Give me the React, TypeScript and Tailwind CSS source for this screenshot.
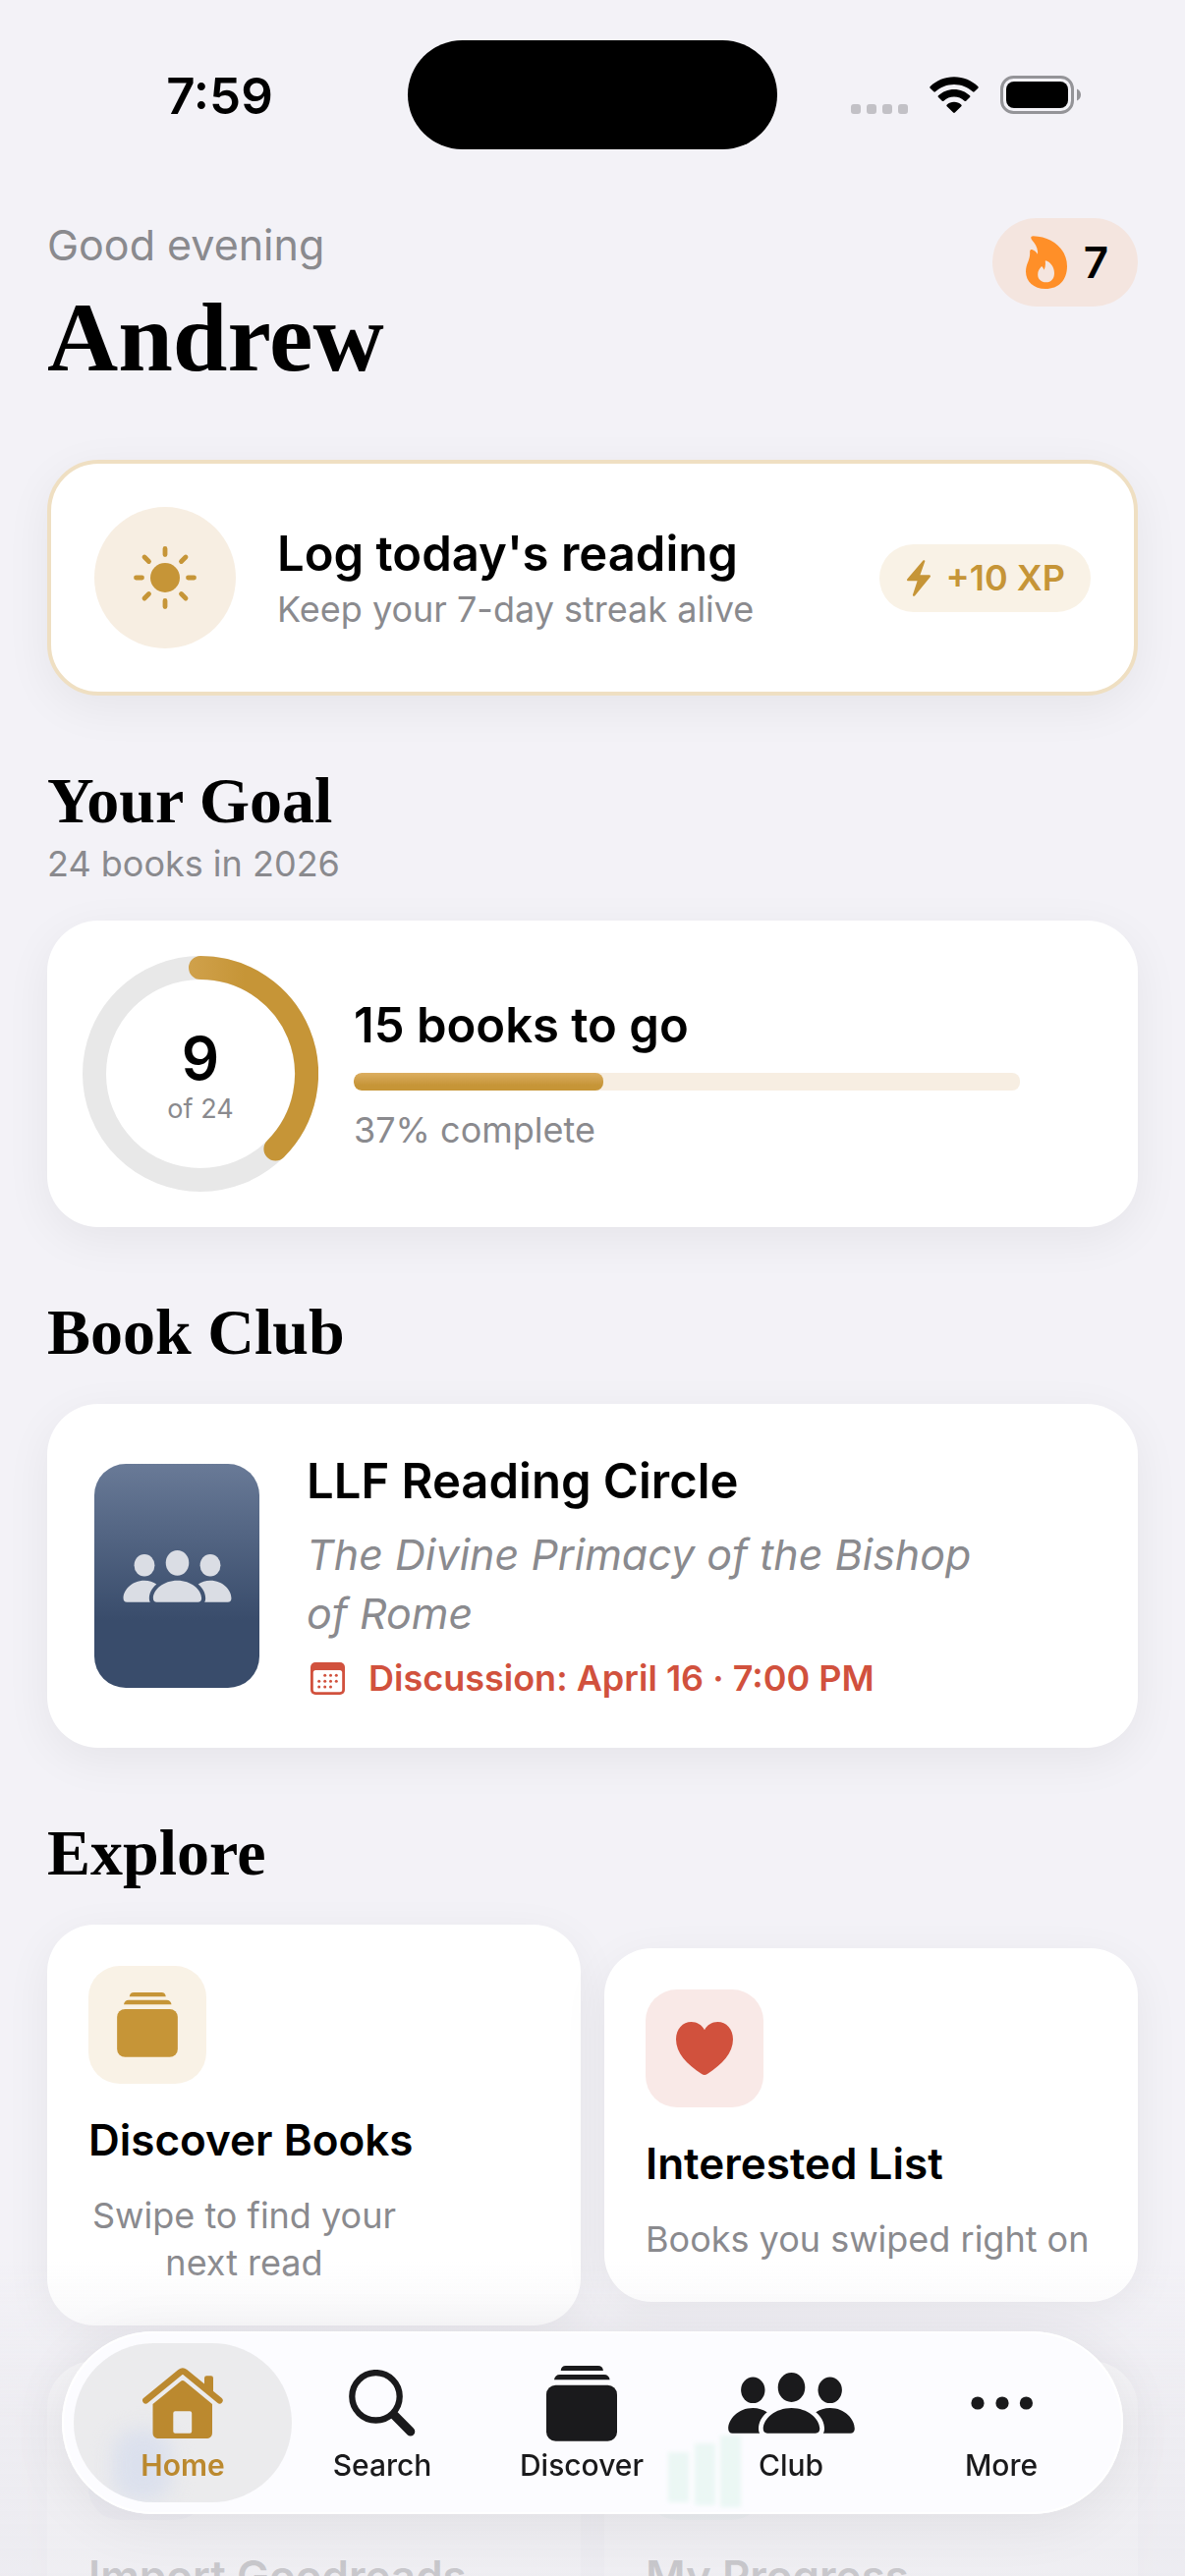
import type { ReactNode } from "react";

const sans = "font-['Inter','Liberation_Sans',sans-serif]";
const serif = "font-['Liberation_Serif','Times_New_Roman',serif]";
const cardShadow = "shadow-[0_12px_48px_rgba(0,0,0,0.06)]";

/* ---------- Icons ---------- */

function WifiIcon() {
  return (
    <svg className="w-[50px] h-[37px]" viewBox="0 0 50 37" aria-hidden="true">
      <path d="M25 .3C34.4.3 43 4 49.3 10c.6.6.6 1.2.1 1.8l-3.7 3.5c-.5.5-1.2.5-1.7 0C39 10.8 32.2 8 25 8S11 10.8 6 15.3c-.5.5-1.2.5-1.7 0L.6 11.8c-.5-.6-.5-1.2.1-1.8C7 4 15.6.3 25 .3Z" />
      <path d="M25 12.9c6.2 0 11.8 2.4 16 6.4.6.6.6 1.2 0 1.8l-3.8 3.6c-.5.5-1.1.5-1.6 0-2.8-2.5-6.5-4.1-10.6-4.1s-7.8 1.6-10.6 4.1c-.5.5-1.1.5-1.6 0L9 21.1c-.6-.6-.6-1.2 0-1.8 4.2-4 9.8-6.4 16-6.4Z" />
      <path d="M25 25.8c2.8 0 5.3 1 7.2 2.7.6.5.6 1.2.1 1.7l-6.4 6.4c-.5.5-1.3.5-1.8 0l-6.4-6.4c-.5-.5-.5-1.2.1-1.7 1.9-1.7 4.4-2.7 7.2-2.7Z" />
    </svg>
  );
}

function BatteryIcon() {
  return (
    <svg className="w-[82px] h-[39px]" viewBox="0 0 82 39" aria-hidden="true">
      <rect x="1.5" y="1.5" width="72" height="36" rx="12" fill="none" stroke="#949498" strokeWidth="3" />
      <rect x="6" y="6" width="63" height="27" rx="8" />
      <path d="M78 13.5c2.4 1 4 3.3 4 6s-1.6 5-4 6Z" fill="#949498" />
    </svg>
  );
}

function FlameIcon() {
  return (
    <svg className="w-[42px] h-[54px]" viewBox="0 0 42 54" fill="#ff8f28" aria-hidden="true">
      <path
        fillRule="evenodd"
        d="M7.5.2C27 .8 42 13.5 42 31c0 14-8.5 23-22 23C8 54 0 46.5 0 36.5 0 27.5 4.8 25 4.1 16.2c0-1.8 1.3-2.4 2.7-2 2.2.6 3.9 2.3 5.2 4.6C12.6 13 10 8.5 6.2 4.2 4.6 2.2 5 .2 7.5.2ZM20.3 25.2c-.5.2-.6.6-.5 1.1.4 3 0 5.7-1.2 8.4-.5-1.3-1.1-2.4-1.9-3.3-.4-.4-.8-.3-1.1.2-1.9 2.5-3.4 4.5-3.4 7.9 0 4.6 3.3 7.8 8.4 7.8S29 43.8 29 38c0-6-3.600-11.200-8.700-12.800Z"
      />
    </svg>
  );
}

function SunIcon() {
  return (
    <svg className="w-16 h-16" viewBox="-32 -32 64 64" fill="#c69537" aria-hidden="true">
      <circle r="15" />
      <g stroke="#c69537" strokeWidth="4.8" strokeLinecap="round">
        <path d="M0-29.5V-23.5M0 23.5V29.5M-29.5 0H-23.5M23.5 0H29.5" />
        <path d="M-21-21-16.5-16.5M21-21 16.5-16.5M-21 21-16.5 16.5M21 21 16.5 16.5" />
      </g>
    </svg>
  );
}

function BoltIcon() {
  return (
    <svg className="w-6 h-[37px]" viewBox="0 0 24 37" fill="#c69537" aria-hidden="true">
      <path d="M16.4.6c.9-1 2.3-.3 1.9 1L13.4 15.3h9.3c1.2 0 1.7 1 1 1.9L8 36.4c-.9 1-2.5.3-2-1.1l4.6-14H1.3c-1.2 0-1.700-1-.9-2L16.4.6Z" />
    </svg>
  );
}

function CalendarIcon() {
  const dots = [
    [14.7, 13.3], [20.5, 13.3], [26.3, 13.3],
    [8.7, 19.3], [14.7, 19.3], [20.5, 19.3], [26.3, 19.3],
    [8.7, 25], [14.7, 25], [20.5, 25],
  ];
  return (
    <svg className="w-[35px] h-[33px]" viewBox="0 0 35 33" fill="#d1513d" aria-hidden="true">
      <rect width="35" height="33" rx="5" />
      <rect x="2.8" y="8" width="29.4" height="22.2" rx="2.5" fill="#fff" />
      {dots.map(([x, y]) => (
        <circle key={`${x}-${y}`} cx={x} cy={y} r="1.5" />
      ))}
    </svg>
  );
}

function HeartIcon() {
  return (
    <svg className="w-[58px] h-[54px]" viewBox="0 0 58 54" fill="#d1513d" aria-hidden="true">
      <path d="M29 54c-.9 0-1.9-.5-2.900-1.100C11 43.5 0 31.5 0 17.8 0 7.3 6.8 0 15.6 0 21.5 0 26.2 3 29 8.2 31.8 3 36.5 0 42.4 0 51.2 0 58 7.3 58 17.8c0 13.7-11 25.7-26.1 35.1-1 .6-2 1.100-2.900 1.100Z" />
    </svg>
  );
}

function StackIcon({ className }: { className: string }) {
  return (
    <svg className={className} viewBox="0 0 72 77" fill="currentColor" aria-hidden="true">
      <path d="M14.7 5C15 1.8 16.8 0 19.8 0h33c3 0 4.8 1.8 5.100 5Z" />
      <path d="M8 14.3C8.4 11 10.5 9 13.8 9h45c3.3 0 5.4 2 5.8 5.3Z" />
      <rect y="19.8" width="72" height="57" rx="9.5" />
    </svg>
  );
}

function PeopleIcon({ className }: { className: string }) {
  const side =
    "M4.5 61.7C1.8 61.7.2 60 .2 57 .2 47.5 10 36 25.3 36c5.5 0 10.5 1.6 14.4 4.3C34 45 31 51 31 57c0 1.8.3 3.4 1.2 4.7Z";
  return (
    <svg className={className} viewBox="0 0 129 62" fill="currentColor" aria-hidden="true">
      <ellipse cx="64.5" cy="15" rx="13.8" ry="15" />
      <ellipse cx="25.3" cy="17.8" rx="12.2" ry="13.2" />
      <ellipse cx="103.7" cy="17.8" rx="12.2" ry="13.2" />
      <path d="M40 61.7c-2.6 0-4.3-1.600-4.300-4.600C35.700 47 48 36 64.5 36S93.3 47 93.3 57.100c0 3-1.700 4.600-4.300 4.600Z" />
      <path d={side} />
      <path d={side} transform="matrix(-1 0 0 1 129 0)" />
    </svg>
  );
}

function HomeIcon() {
  return (
    <svg className="w-[82px] h-[72px]" viewBox="0 0 82 72" fill="currentColor" aria-hidden="true">
      <path
        d="M3.4 33.3 38.5 4.5q2.4-1.9 4.8 0L78.4 33.3"
        fill="none"
        stroke="currentColor"
        strokeWidth="6.6"
        strokeLinecap="round"
      />
      <path d="M63 22V10.5q0-2.3 2.3-2.3h4.4q2.3 0 2.3 2.3V29Z" />
      <path
        fillRule="evenodd"
        d="M10.5 37 38.7 13.9q2.2-1.6 4.4 0L71 37v29c0 4-2.3 6-6.3 6H16.8c-4 0-6.3-2-6.3-6ZM33.3 44.3q-2 0-2 2v18.4q0 2 2 2h14.9q2 0 2-2V46.3q0-2-2-2Z"
      />
    </svg>
  );
}

function SearchIcon() {
  return (
    <svg className="w-[68px] h-[68px]" viewBox="0 0 68 68" fill="none" stroke="currentColor" aria-hidden="true">
      <circle cx="27.5" cy="27.3" r="24.2" strokeWidth="6.3" />
      <path d="M46.5 46.5 62.8 63" strokeWidth="9" strokeLinecap="round" />
    </svg>
  );
}

function MoreIcon() {
  return (
    <svg className="w-16 h-[14px]" viewBox="0 0 64 14" fill="currentColor" aria-hidden="true">
      <circle cx="8" cy="7" r="6.6" />
      <circle cx="33" cy="7" r="6.6" />
      <circle cx="57.4" cy="7" r="6.6" />
    </svg>
  );
}

/* ---------- Sections ---------- */

function StatusBar() {
  return (
    <div className="grid h-48 grid-cols-[1fr_376px_1fr] items-center">
      <div className="pt-1 pl-8 text-center text-[51px] leading-[64px] font-semibold">7:59</div>
      <div className="h-[111px] rounded-full bg-black" />
      <div className="flex items-center justify-end gap-[22px] pr-[106px]">
        <div className="flex gap-1.5 pt-[30px]">
          {[0, 1, 2, 3].map((i) => (
            <span key={i} className="size-[10px] rounded-[3px] bg-[#c2c1c6]" />
          ))}
        </div>
        <WifiIcon />
        <BatteryIcon />
      </div>
    </div>
  );
}

function Header() {
  return (
    <header className="flex items-start justify-between pt-[30px]">
      <div>
        <p className="text-[43px] leading-[54px] text-[#8a8a8e]">Good evening</p>
        <h1 className={`mt-3 text-[100px] leading-[112px] font-bold ${serif}`}>Andrew</h1>
      </div>
      <button className="flex h-[90px] items-center gap-[17px] rounded-full bg-[#f4e5df] pr-[30px] pl-[34px] text-[44px] leading-[54px] font-semibold">
        <FlameIcon />
        <span>7</span>
      </button>
    </header>
  );
}

function LogReadingCard() {
  return (
    <a
      href="#log"
      className={`mt-[68px] flex items-center rounded-[52px] border-4 border-[#efdfc2] bg-white p-11 ${cardShadow}`}
    >
      <span className="flex size-36 items-center justify-center rounded-full bg-[#f7eee2]">
        <SunIcon />
      </span>
      <span className="ml-[42px] flex flex-1 flex-col">
        <span className="text-[49px] leading-[64px] font-semibold">Log today's reading</span>
        <span className="text-[36px] leading-[48px] text-[#8a8a8e]">Keep your 7-day streak alive</span>
      </span>
      <span className="flex h-[69px] items-center gap-4 rounded-full bg-[#f9f2e6] pr-[26px] pl-7 text-[36px] leading-[48px] font-semibold text-[#c69537]">
        <BoltIcon />
        +10 XP
      </span>
    </a>
  );
}

function SectionTitle({ children }: { children: ReactNode }) {
  return <h2 className={`text-[66px] leading-[80px] font-bold ${serif}`}>{children}</h2>;
}

function GoalSection() {
  const read = 9;
  const total = 24;
  const pct = (read / total) * 100;

  return (
    <section className="mt-[67px]">
      <SectionTitle>Your Goal</SectionTitle>
      <p className="text-[36px] leading-[48px] text-[#8a8a8e]">24 books in 2026</p>
      <div className={`mt-[34px] flex items-center gap-9 rounded-[52px] bg-white p-9 pr-[120px] ${cardShadow}`}>
        <div className="grid size-60 shrink-0 place-items-center">
          <svg className="col-start-1 row-start-1 size-60" viewBox="0 0 240 240" fill="none" aria-hidden="true">
            <defs>
              <linearGradient id="ring" gradientUnits="userSpaceOnUse" x1="108" y1="0" x2="165" y2="0">
                <stop offset="0" stopColor="#d0a14b" />
                <stop offset="1" stopColor="#c69537" />
              </linearGradient>
            </defs>
            <circle cx="120" cy="120" r="108" stroke="#e8e8e8" strokeWidth="24" />
            {/* 9/24 of the circle, clockwise from the top */}
            <path d="M120 12A108 108 0 0 1 196.4 196.4" stroke="url(#ring)" strokeWidth="24" strokeLinecap="round" />
          </svg>
          <div className="col-start-1 row-start-1 flex flex-col items-center gap-0.5 pt-1.5">
            <span className="text-[60px] leading-[64px] font-semibold">{read}</span>
            <span className="text-[27px] leading-9 text-[#8a8a8e]">of {total}</span>
          </div>
        </div>
        <div className="flex-1">
          <h3 className="text-[49px] leading-[64px] font-semibold">15 books to go</h3>
          <div
            role="progressbar"
            aria-label="Books read"
            aria-valuenow={read}
            aria-valuemax={total}
            className="mt-4 h-[18px] overflow-hidden rounded-[8px] bg-[#f7eee2]"
          >
            <div
              className="h-full rounded-[8px] bg-gradient-to-b from-[#dcae60] to-[#c69537] to-70%"
              style={{ width: `${pct}%` }}
            />
          </div>
          <p className="mt-4 text-[36px] leading-[48px] text-[#8a8a8e]">37% complete</p>
        </div>
      </div>
    </section>
  );
}

function BookClubSection() {
  return (
    <section className="mt-[67px]">
      <SectionTitle>Book Club</SectionTitle>
      <a
        href="#club"
        className={`mt-[33px] flex items-center gap-12 rounded-[52px] bg-white px-12 py-[47px] ${cardShadow}`}
      >
        <span className="flex h-[228px] w-[168px] shrink-0 items-center justify-center rounded-[32px] bg-gradient-to-b from-[#697a97] to-[#394c6b] to-70% text-[#dadde4]">
          <PeopleIcon className="w-[111px] h-[53px]" />
        </span>
        <span className="flex flex-1 flex-col gap-3">
          <span className="text-[49px] leading-[64px] font-semibold">LLF Reading Circle</span>
          <span className="max-w-[730px] text-[43px] leading-[60px] text-[#8a8a8e] italic">
            The Divine Primacy of the Bishop of Rome
          </span>
          <span className="flex items-center gap-6 pl-1 text-[36px] leading-[48px] font-semibold text-[#d1513d]">
            <CalendarIcon />
            Discussion: April 16 · 7:00 PM
          </span>
        </span>
      </a>
    </section>
  );
}

type ExploreCardProps = {
  title: string;
  text: string;
  tile: string;
  icon?: ReactNode;
};

function ExploreCard({ title, text, tile, icon }: ExploreCardProps) {
  return (
    <a
      href="#explore"
      className={`flex flex-col items-start rounded-[48px] bg-white px-[42px] pt-[42px] pb-10 ${cardShadow}`}
    >
      <span className={`flex size-[120px] items-center justify-center rounded-[32px] ${tile}`}>{icon}</span>
      <span className="mt-[30px] text-[44px] leading-[54px] font-semibold">{title}</span>
      <span className="mt-[26px] text-center text-[36px] leading-[48px] text-[#8a8a8e]">{text}</span>
    </a>
  );
}

function ExploreSection() {
  return (
    <section className="mt-[67px]">
      <SectionTitle>Explore</SectionTitle>
      <div className="mt-[33px] grid grid-cols-2 items-center gap-x-6 gap-y-9">
        <a
          href="#discover"
          className={`flex flex-col items-start rounded-[48px] bg-white px-[42px] pt-[42px] pb-10 ${cardShadow}`}
        >
          <span className="flex size-[120px] items-center justify-center rounded-[32px] bg-[#f9f2e6] text-[#c69537]">
            <StackIcon className="w-[62px] h-[66px]" />
          </span>
          <span className="mt-[30px] text-[44px] leading-[54px] font-semibold">Discover Books</span>
          <span className="mt-[26px] w-[317px] text-center text-[36px] leading-[48px] text-[#8a8a8e]">
            Swipe to find your next read
          </span>
        </a>
        <ExploreCard
          title="Interested List"
          text="Books you swiped right on"
          tile="bg-[#f9e9e7]"
          icon={<HeartIcon />}
        />
        <ExploreCard title="Import Goodreads" text="Bring in your library" tile="bg-[#e4e8f4]" />
        <ExploreCard title="My Progress" text="Stats and badges" tile="bg-[#e2f4ed]" />
      </div>
    </section>
  );
}

/* ---------- Tab bar ---------- */

const tabs = [
  { label: "Home", icon: <HomeIcon />, className: "flex-[222] bg-[#e9e9eb]/90 text-[#bb892f] font-semibold" },
  { label: "Search", icon: <SearchIcon />, className: "flex-[184] font-medium" },
  { label: "Discover", icon: <StackIcon className="w-[72px] h-[77px]" />, className: "flex-[222] font-medium" },
  { label: "Club", icon: <PeopleIcon className="w-[129px] h-[62px]" />, className: "flex-[204] font-medium" },
  { label: "More", icon: <MoreIcon />, className: "flex-[224] font-medium" },
];

function TabBar() {
  return (
    <nav className="fixed inset-x-[63px] bottom-[63px] flex rounded-full bg-[#fcfcff] p-3 text-[#1a1a1c] shadow-[0_8px_60px_rgba(0,0,0,0.07)] inset-ring-2 inset-ring-white">
      {/* soft colour seen through the glass */}
      <svg className="absolute inset-0 size-full" viewBox="0 0 1080 186" aria-hidden="true">
        <filter id="soft">
          <feGaussianBlur stdDeviation="2" />
        </filter>
        <g fill="#ebf7f4" filter="url(#soft)">
          <path d="M617 123h21v51h-21zM644 114h21v63h-21zM670 106h21v73h-21z" />
        </g>
      </svg>
      {tabs.map((tab, i) => (
        <button
          key={tab.label}
          aria-current={i === 0 ? "page" : undefined}
          className={`relative flex h-[162px] flex-col items-center overflow-hidden rounded-full pt-4 text-[30px] leading-9 ${tab.className}`}
        >
          {i === 0 && (
            <span className="absolute top-[88px] left-10 h-[72px] w-[60px] rounded-[24px] bg-[#dbe0ed] blur-[10px]" />
          )}
          <span className="relative flex h-[90px] items-center">{tab.icon}</span>
          <span className="relative">{tab.label}</span>
        </button>
      ))}
    </nav>
  );
}

export default function App() {
  return (
    <div className={`h-screen overflow-hidden bg-[#f3f2f7] text-black ${sans}`}>
      <StatusBar />
      <main className="px-12">
        <Header />
        <LogReadingCard />
        <GoalSection />
        <BookClubSection />
        <ExploreSection />
      </main>
      <div className="pointer-events-none fixed inset-x-0 bottom-0 h-80 bg-gradient-to-b from-[#ecebf0]/0 via-[#ecebf0]/80 via-50% to-[#ecebf0]/85" />
      <TabBar />
    </div>
  );
}
